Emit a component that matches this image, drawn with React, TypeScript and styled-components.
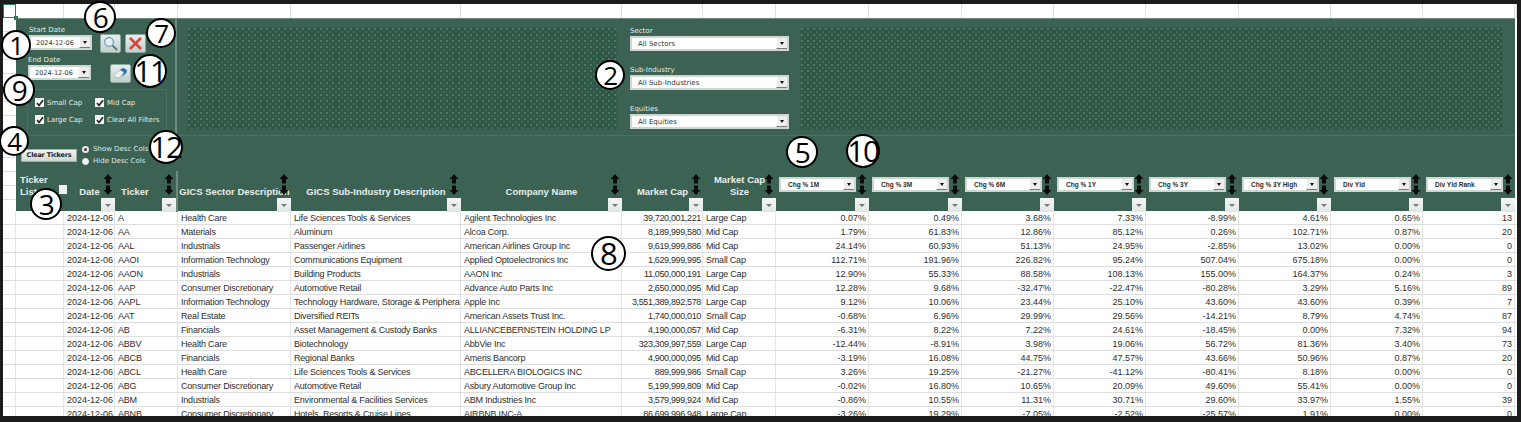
import styled, { createGlobalStyle } from "styled-components";

const GREEN = "#3b6252";
const EDGE = "#6d8c7e";
const GRID = "#dedede";

const COLUMNS = "13px 48px 51px 63px 113px 170px 161px 81px 73px 93px 93px 92px 92px 93px 92px 92px 92px 2px";

const GlobalStyle = createGlobalStyle`
  html, body {
    margin: 0;
    padding: 0;
    background: #1c1c1c;
  }
  body {
    font-family: "Liberation Sans", Arial, sans-serif;
  }
`;

const Frame = styled.div`
  position: relative;
  width: 1521px;
  height: 422px;
  padding: 4px 4px 6px 3px;
  box-sizing: border-box;
  background: #1c1c1c;
  overflow: hidden;
`;

const Sheet = styled.div`
  width: 1514px;
  height: 412px;
  background: #fff;
  overflow: hidden;
`;

const TopRow = styled.div`
  display: grid;
  grid-template-columns: ${COLUMNS};
  height: 14px;
`;

const TopCell = styled.div`
  border-right: 1px solid ${GRID};
`;

const SelectedCell = styled.div`
  position: relative;
  border: 1px solid #2f7d55;
  box-sizing: border-box;
  &::after {
    content: "";
    position: absolute;
    right: -3px;
    bottom: -3px;
    width: 4px;
    height: 4px;
    background: #2f7d55;
  }
`;

const PanelRow = styled.div`
  display: flex;
  height: 193px;
`;

const Gutter = styled.div`
  width: 13px;
  flex: none;
  background: repeating-linear-gradient(to bottom, #fff 0, #fff 13px, ${GRID} 13px, ${GRID} 14px);
`;

const Panel = styled.div`
  width: 1499px;
  background: ${GREEN};
  border-top: 1px solid ${EDGE};
  box-sizing: border-box;
`;

const ControlBand = styled.div`
  display: flex;
  height: 116px;
  border-bottom: 1px solid #4b7161;
`;

const LeftControls = styled.div`
  width: 161px;
  flex: none;
  box-sizing: border-box;
  padding-top: 6px;
  border-right: 2px solid ${EDGE};
`;

const FieldRow = styled.div<{ $inset: number }>`
  display: flex;
  align-items: flex-end;
  height: 25px;
  margin-bottom: 5px;
  padding-left: ${(p) => p.$inset}px;
`;

const Field = styled.div`
  width: 63px;
  flex: none;
`;

const FieldLabel = styled.div`
  font: 7px/9px "DejaVu Sans", sans-serif;
  color: #e4ece8;
  white-space: nowrap;
`;

const SelectBox = styled.div`
  display: flex;
  align-items: center;
  justify-content: space-between;
  height: 15px;
  box-sizing: border-box;
  background: #fff;
  border: 2px solid #cfd6d2;
  color: #333;
  white-space: nowrap;
  overflow: hidden;
`;

const DateValue = styled.span`
  font: 6.5px "DejaVu Sans", sans-serif;
  padding-left: 5px;
`;

const FilterValue = styled.span`
  font: 7px "DejaVu Sans", sans-serif;
  padding-left: 6px;
`;

const HeaderValue = styled.span`
  font: bold 6.5px "Liberation Sans", sans-serif;
  padding-left: 7px;
  color: #2c2c2c;
`;

const SelectArrow = styled.span`
  display: flex;
  align-items: center;
  justify-content: center;
  width: 11px;
  height: 100%;
  flex: none;
  background: #eeeeee;
  border-left: 1px solid #fff;
  border-bottom: 1px solid #777;
  box-sizing: border-box;
  &::before {
    content: "";
    border: 2.5px solid transparent;
    border-top: 3px solid #111;
    border-bottom: 0;
  }
`;

const IconButton = styled.button<{ $gap: number }>`
  width: 21px;
  height: 19px;
  flex: none;
  margin: 0 0 -3px ${(p) => p.$gap}px;
  padding: 0;
  display: flex;
  align-items: center;
  justify-content: center;
  background: linear-gradient(#e6eeee, #bfd0cd);
  border: 1px solid #8fa9a0;
  border-radius: 2px;
`;

const CheckGroup = styled.div`
  display: grid;
  grid-template-columns: 60px 1fr;
  grid-auto-rows: 17px;
  align-content: start;
  width: 140px;
  height: 46px;
  margin: 9px 0 0 11px;
  padding: 4px 0 0 7px;
  box-sizing: border-box;
  border: 1px solid #4b7161;
  border-bottom: 0;
`;

const CheckItem = styled.label`
  display: flex;
  align-items: center;
  gap: 3px;
  font: 7px "DejaVu Sans", sans-serif;
  color: #e4ece8;
  white-space: nowrap;
`;

const CheckBox = styled.span`
  display: flex;
  align-items: center;
  justify-content: center;
  width: 9px;
  height: 9px;
  flex: none;
  background: #f4f4f4;
`;

const DottedPanel = styled.div<{ $width: number; $left: number }>`
  width: ${(p) => p.$width}px;
  height: 103px;
  margin: 8px 0 0 ${(p) => p.$left}px;
  flex: none;
  background-color: #2f5746;
  background-image:
    radial-gradient(circle at 1px 1px, #5f8b79 0.6px, transparent 0.9px),
    radial-gradient(circle at 1px 1px, #4a7763 0.6px, transparent 0.9px);
  background-size: 6px 6px;
  background-position: 0 0, 3px 3px;
  border: 1px solid #355e4d;
  box-sizing: border-box;
`;

const FilterColumn = styled.div`
  width: 159px;
  flex: none;
  margin-left: 13px;
  padding-top: 8px;
  display: flex;
  flex-direction: column;
  gap: 15px;
`;

const ButtonsBand = styled.div`
  display: flex;
  align-items: center;
  gap: 5px;
  height: 35px;
  padding: 3px 0 0 5px;
  box-sizing: border-box;
`;

const ClearButton = styled.button`
  width: 56px;
  height: 13px;
  padding: 0;
  font: bold 6.5px "DejaVu Sans", sans-serif;
  letter-spacing: -0.2px;
  color: #222;
  background: linear-gradient(#f3f3f0, #cfd6d0);
  border: 1px solid #9db0a6;
  white-space: nowrap;
`;

const RadioList = styled.div`
  display: flex;
  flex-direction: column;
  gap: 4px;
`;

const RadioItem = styled.label`
  display: flex;
  align-items: center;
  gap: 4px;
  height: 8px;
  font: 7px "DejaVu Sans", sans-serif;
  color: #dfe8e3;
  white-space: nowrap;
`;

const RadioDot = styled.span<{ $on?: boolean }>`
  width: 7px;
  height: 7px;
  flex: none;
  border-radius: 50%;
  box-sizing: border-box;
  background: ${(p) => (p.$on ? "#444" : "#f2f2f2")};
  border: ${(p) => (p.$on ? "2px solid #e8e8e8" : "1px solid #f2f2f2")};
`;

const HeaderRow = styled.div`
  display: grid;
  grid-template-columns: 48px 51px 63px 113px 170px 161px 81px 73px 93px 93px 92px 92px 93px 92px 92px 92px;
  height: 41px;
`;

const HeaderCell = styled.div<{ $divider?: boolean; $left?: boolean }>`
  position: relative;
  display: flex;
  align-items: flex-end;
  justify-content: ${(p) => (p.$left ? "flex-start" : "center")};
  padding: 0 0 14px ${(p) => (p.$left ? "6px" : "0")};
  box-sizing: border-box;
  border-right: ${(p) => (p.$divider ? `2px solid ${EDGE}` : "0")};
`;

const HeaderLabel = styled.div`
  font: bold 9.5px/12px "Liberation Sans", sans-serif;
  color: #e9efec;
  text-align: center;
  white-space: nowrap;
`;

const TickerList = styled.div`
  display: flex;
  align-items: flex-end;
  gap: 11px;
  margin-left: -2px;
  font: bold 9.5px/12px "Liberation Sans", sans-serif;
  color: #e9efec;
`;

const ListCheck = styled.span`
  width: 8px;
  height: 9px;
  margin-bottom: 4px;
  background: #f2f2f2;
`;

const HeaderSelect = styled.div`
  align-self: flex-start;
  width: 77px;
  margin: 6px auto 0 3px;
`;

const SortTools = styled.div`
  position: absolute;
  top: 3px;
  right: 0;
  bottom: 0;
  width: 14px;
  display: flex;
  flex-direction: column;
  align-items: center;
  justify-content: space-between;
`;

const FilterButton = styled.span`
  display: flex;
  align-items: center;
  justify-content: center;
  width: 14px;
  height: 14px;
  background: linear-gradient(#f4f6f6, #dfe5e5);
  &::before {
    content: "";
    border: 3px solid transparent;
    border-top: 3px solid #777;
    border-bottom: 0;
  }
`;

const DataRow = styled.div`
  display: grid;
  grid-template-columns: ${COLUMNS};
  height: 14px;
  border-bottom: 1px solid ${GRID};
  box-sizing: border-box;
`;

const DataCell = styled.div<{ $right?: boolean }>`
  font: 9px/15px "Liberation Sans", sans-serif;
  letter-spacing: -0.2px;
  color: #2e2e2e;
  padding: ${(p) => (p.$right ? "0 1px 0 0" : "0 0 0 3px")};
  text-align: ${(p) => (p.$right ? "right" : "left")};
  border-right: 1px solid #e6e6e6;
  white-space: nowrap;
  overflow: hidden;
`;

const DateCell = styled(DataCell)`
  letter-spacing: 0;
`;

const CapCell = styled(DataCell)`
  letter-spacing: -0.35px;
`;

const PctCell = styled(DataCell)`
  letter-spacing: 0;
  padding-right: 2px;
`;

const Badge = styled.div<{ $x: number; $y: number; $size: number }>`
  position: absolute;
  left: ${(p) => p.$x - p.$size / 2}px;
  top: ${(p) => p.$y - p.$size / 2}px;
  width: ${(p) => p.$size}px;
  height: ${(p) => p.$size}px;
  display: flex;
  align-items: center;
  justify-content: center;
  box-sizing: border-box;
  border: 2.5px solid #000;
  border-radius: 50%;
  background: #fff;
  color: #000;
  font: ${(p) => p.$size - 4}px/1 "Open Sans", sans-serif;
  letter-spacing: -1.5px;
`;

const SortArrows = () => (
  <svg width="10" height="21" viewBox="0 0 10 21">
    <path d="M5 0 L9.5 5 H7 V9.5 H3 V5 H.5 Z M5 21 L.5 16 H3 V11.5 H7 V16 H9.5 Z" fill="#0c0c0c" />
  </svg>
);

const Check = () => (
  <svg width="8" height="8" viewBox="0 0 8 8">
    <path d="M1 4 L3 6.5 L7 1.2" fill="none" stroke="#222" strokeWidth="1.6" />
  </svg>
);

const MagnifierIcon = () => (
  <svg width="15" height="15" viewBox="0 0 15 15">
    <circle cx="6" cy="6" r="4.4" fill="#dff0f7" stroke="#7d99a8" strokeWidth="1.2" />
    <path d="M9.4 9.4 L14 14" stroke="#5f6f78" strokeWidth="1.8" />
  </svg>
);

const CrossIcon = () => (
  <svg width="15" height="15" viewBox="0 0 15 15">
    <path d="M2 2 L13 13 M13 2 L2 13" stroke="#d8433a" strokeWidth="2.6" />
  </svg>
);

const EraserIcon = () => (
  <svg width="15" height="13" viewBox="0 0 15 13">
    <path d="M1 8 L7 3 L11 5 L6 11 L2 10.5 Z" fill="#f4f4f4" stroke="#8a9aa0" strokeWidth=".6" />
    <path d="M7 3 L10 .8 L14 3 L11 5 Z M11 5 L14 3 L13.5 5.5 L9 10 Z" fill="#2f6fb5" />
  </svg>
);

const Sort = () => (
  <SortTools>
    <SortArrows />
    <FilterButton />
  </SortTools>
);

const metricHeaders = ["Chg % 1M", "Chg % 3M", "Chg % 6M", "Chg % 1Y", "Chg % 3Y", "Chg % 3Y High", "Div Yld", "Div Yld Rank"];

const rows: string[][] = [
  ["A", "Health Care", "Life Sciences Tools & Services", "Agilent Technologies Inc", "39,720,001,221", "Large Cap", "0.07%", "0.49%", "3.68%", "7.33%", "-8.99%", "4.61%", "0.65%", "13"],
  ["AA", "Materials", "Aluminum", "Alcoa Corp.", "8,189,999,580", "Mid Cap", "1.79%", "61.83%", "12.86%", "85.12%", "0.26%", "102.71%", "0.87%", "20"],
  ["AAL", "Industrials", "Passenger Airlines", "American Airlines Group Inc", "9,619,999,886", "Mid Cap", "24.14%", "60.93%", "51.13%", "24.95%", "-2.85%", "13.02%", "0.00%", "0"],
  ["AAOI", "Information Technology", "Communications Equipment", "Applied Optoelectronics Inc", "1,629,999,995", "Small Cap", "112.71%", "191.96%", "226.82%", "95.24%", "507.04%", "675.18%", "0.00%", "0"],
  ["AAON", "Industrials", "Building Products", "AAON Inc", "11,050,000,191", "Large Cap", "12.90%", "55.33%", "88.58%", "108.13%", "155.00%", "164.37%", "0.24%", "3"],
  ["AAP", "Consumer Discretionary", "Automotive Retail", "Advance Auto Parts Inc", "2,650,000,095", "Mid Cap", "12.28%", "9.68%", "-32.47%", "-22.47%", "-80.28%", "3.29%", "5.16%", "89"],
  ["AAPL", "Information Technology", "Technology Hardware, Storage & Peripherals", "Apple Inc", "3,551,389,892,578", "Large Cap", "9.12%", "10.06%", "23.44%", "25.10%", "43.60%", "43.60%", "0.39%", "7"],
  ["AAT", "Real Estate", "Diversified REITs", "American Assets Trust Inc.", "1,740,000,010", "Small Cap", "-0.68%", "6.96%", "29.99%", "29.56%", "-14.21%", "8.79%", "4.74%", "87"],
  ["AB", "Financials", "Asset Management & Custody Banks", "ALLIANCEBERNSTEIN HOLDING LP", "4,190,000,057", "Mid Cap", "-6.31%", "8.22%", "7.22%", "24.61%", "-18.45%", "0.00%", "7.32%", "94"],
  ["ABBV", "Health Care", "Biotechnology", "AbbVie Inc", "323,309,997,559", "Large Cap", "-12.44%", "-8.91%", "3.98%", "19.06%", "56.72%", "81.36%", "3.40%", "73"],
  ["ABCB", "Financials", "Regional Banks", "Ameris Bancorp", "4,900,000,095", "Mid Cap", "-3.19%", "16.08%", "44.75%", "47.57%", "43.66%", "50.96%", "0.87%", "20"],
  ["ABCL", "Health Care", "Life Sciences Tools & Services", "ABCELLERA BIOLOGICS INC", "889,999,986", "Small Cap", "3.26%", "19.25%", "-21.27%", "-41.12%", "-80.41%", "8.18%", "0.00%", "0"],
  ["ABG", "Consumer Discretionary", "Automotive Retail", "Asbury Automotive Group Inc", "5,199,999,809", "Mid Cap", "-0.02%", "16.80%", "10.65%", "20.09%", "49.60%", "55.41%", "0.00%", "0"],
  ["ABM", "Industrials", "Environmental & Facilities Services", "ABM Industries Inc", "3,579,999,924", "Mid Cap", "-0.86%", "10.55%", "11.31%", "30.71%", "29.60%", "33.97%", "1.55%", "39"],
  ["ABNB", "Consumer Discretionary", "Hotels, Resorts & Cruise Lines", "AIRBNB INC-A", "86,699,996,948", "Large Cap", "-3.26%", "19.29%", "-7.05%", "-2.52%", "-25.57%", "1.91%", "0.00%", "0"],
];

const badges = [
  { n: "1", x: 16, y: 45, size: 30 },
  { n: "2", x: 610, y: 75, size: 30 },
  { n: "3", x: 46, y: 204, size: 32 },
  { n: "4", x: 14, y: 141, size: 30 },
  { n: "5", x: 802, y: 152, size: 32 },
  { n: "6", x: 100, y: 17, size: 32 },
  { n: "7", x: 161, y: 33, size: 30 },
  { n: "8", x: 608, y: 253, size: 35 },
  { n: "9", x: 19, y: 90, size: 32 },
  { n: "10", x: 863, y: 151, size: 34 },
  { n: "11", x: 150, y: 71, size: 34 },
  { n: "12", x: 166, y: 147, size: 34 },
];

export default function App() {
  return (
    <Frame>
      <GlobalStyle />
      <Sheet>
        <TopRow>
          <SelectedCell />
          {COLUMNS.split(" ").slice(1).map((w, i) => (
            <TopCell key={i} />
          ))}
        </TopRow>
        <PanelRow>
          <Gutter />
          <Panel>
            <ControlBand>
              <LeftControls>
                <FieldRow $inset={13}>
                  <Field>
                    <FieldLabel>Start Date</FieldLabel>
                    <SelectBox>
                      <DateValue>2024-12-06</DateValue>
                      <SelectArrow />
                    </SelectBox>
                  </Field>
                  <IconButton $gap={8}><MagnifierIcon /></IconButton>
                  <IconButton $gap={4}><CrossIcon /></IconButton>
                </FieldRow>
                <FieldRow $inset={12}>
                  <Field>
                    <FieldLabel>End Date</FieldLabel>
                    <SelectBox>
                      <DateValue>2024-12-06</DateValue>
                      <SelectArrow />
                    </SelectBox>
                  </Field>
                  <IconButton $gap={19}><EraserIcon /></IconButton>
                </FieldRow>
                <CheckGroup>
                  <CheckItem><CheckBox><Check /></CheckBox>Small Cap</CheckItem>
                  <CheckItem><CheckBox><Check /></CheckBox>Mid Cap</CheckItem>
                  <CheckItem><CheckBox><Check /></CheckBox>Large Cap</CheckItem>
                  <CheckItem><CheckBox><Check /></CheckBox>Clear All Filters</CheckItem>
                </CheckGroup>
              </LeftControls>
              <DottedPanel $width={430} $left={10} />
              <FilterColumn>
                {[
                  ["Sector", "All Sectors"],
                  ["Sub-Industry", "All Sub-Industries"],
                  ["Equities", "All Equities"],
                ].map(([label, value]) => (
                  <div key={label}>
                    <FieldLabel>{label}</FieldLabel>
                    <SelectBox>
                      <FilterValue>{value}</FilterValue>
                      <SelectArrow />
                    </SelectBox>
                  </div>
                ))}
              </FilterColumn>
              <DottedPanel $width={703} $left={11} />
            </ControlBand>
            <ButtonsBand>
              <ClearButton>Clear Tickers</ClearButton>
              <RadioList>
                <RadioItem><RadioDot $on />Show Desc Cols</RadioItem>
                <RadioItem><RadioDot />Hide Desc Cols</RadioItem>
              </RadioList>
            </ButtonsBand>
            <HeaderRow>
              <HeaderCell $left>
                <TickerList>
                  <div>Ticker<br />List</div>
                  <ListCheck />
                </TickerList>
              </HeaderCell>
              <HeaderCell><HeaderLabel>Date</HeaderLabel><Sort /></HeaderCell>
              <HeaderCell $left $divider><HeaderLabel>Ticker</HeaderLabel><Sort /></HeaderCell>
              <HeaderCell><HeaderLabel>GICS Sector Description</HeaderLabel><Sort /></HeaderCell>
              <HeaderCell><HeaderLabel>GICS Sub-Industry Description</HeaderLabel><Sort /></HeaderCell>
              <HeaderCell><HeaderLabel>Company Name</HeaderLabel><Sort /></HeaderCell>
              <HeaderCell><HeaderLabel>Market Cap</HeaderLabel><Sort /></HeaderCell>
              <HeaderCell><HeaderLabel>Market Cap<br />Size</HeaderLabel><Sort /></HeaderCell>
              {metricHeaders.map((h) => (
                <HeaderCell key={h}>
                  <HeaderSelect>
                    <SelectBox>
                      <HeaderValue>{h}</HeaderValue>
                      <SelectArrow />
                    </SelectBox>
                  </HeaderSelect>
                  <Sort />
                </HeaderCell>
              ))}
            </HeaderRow>
          </Panel>
        </PanelRow>
        {rows.map((r) => (
          <DataRow key={r[0]}>
            <DataCell />
            <DataCell />
            <DateCell $right>2024-12-06</DateCell>
            <DataCell>{r[0]}</DataCell>
            <DataCell>{r[1]}</DataCell>
            <DataCell>{r[2]}</DataCell>
            <DataCell>{r[3]}</DataCell>
            <CapCell $right>{r[4]}</CapCell>
            <DataCell>{r[5]}</DataCell>
            {r.slice(6).map((v, i) => (
              <PctCell key={i} $right>{v}</PctCell>
            ))}
            <DataCell />
          </DataRow>
        ))}
      </Sheet>
      {badges.map((b) => (
        <Badge key={b.n} $x={b.x} $y={b.y} $size={b.size}>{b.n}</Badge>
      ))}
    </Frame>
  );
}
